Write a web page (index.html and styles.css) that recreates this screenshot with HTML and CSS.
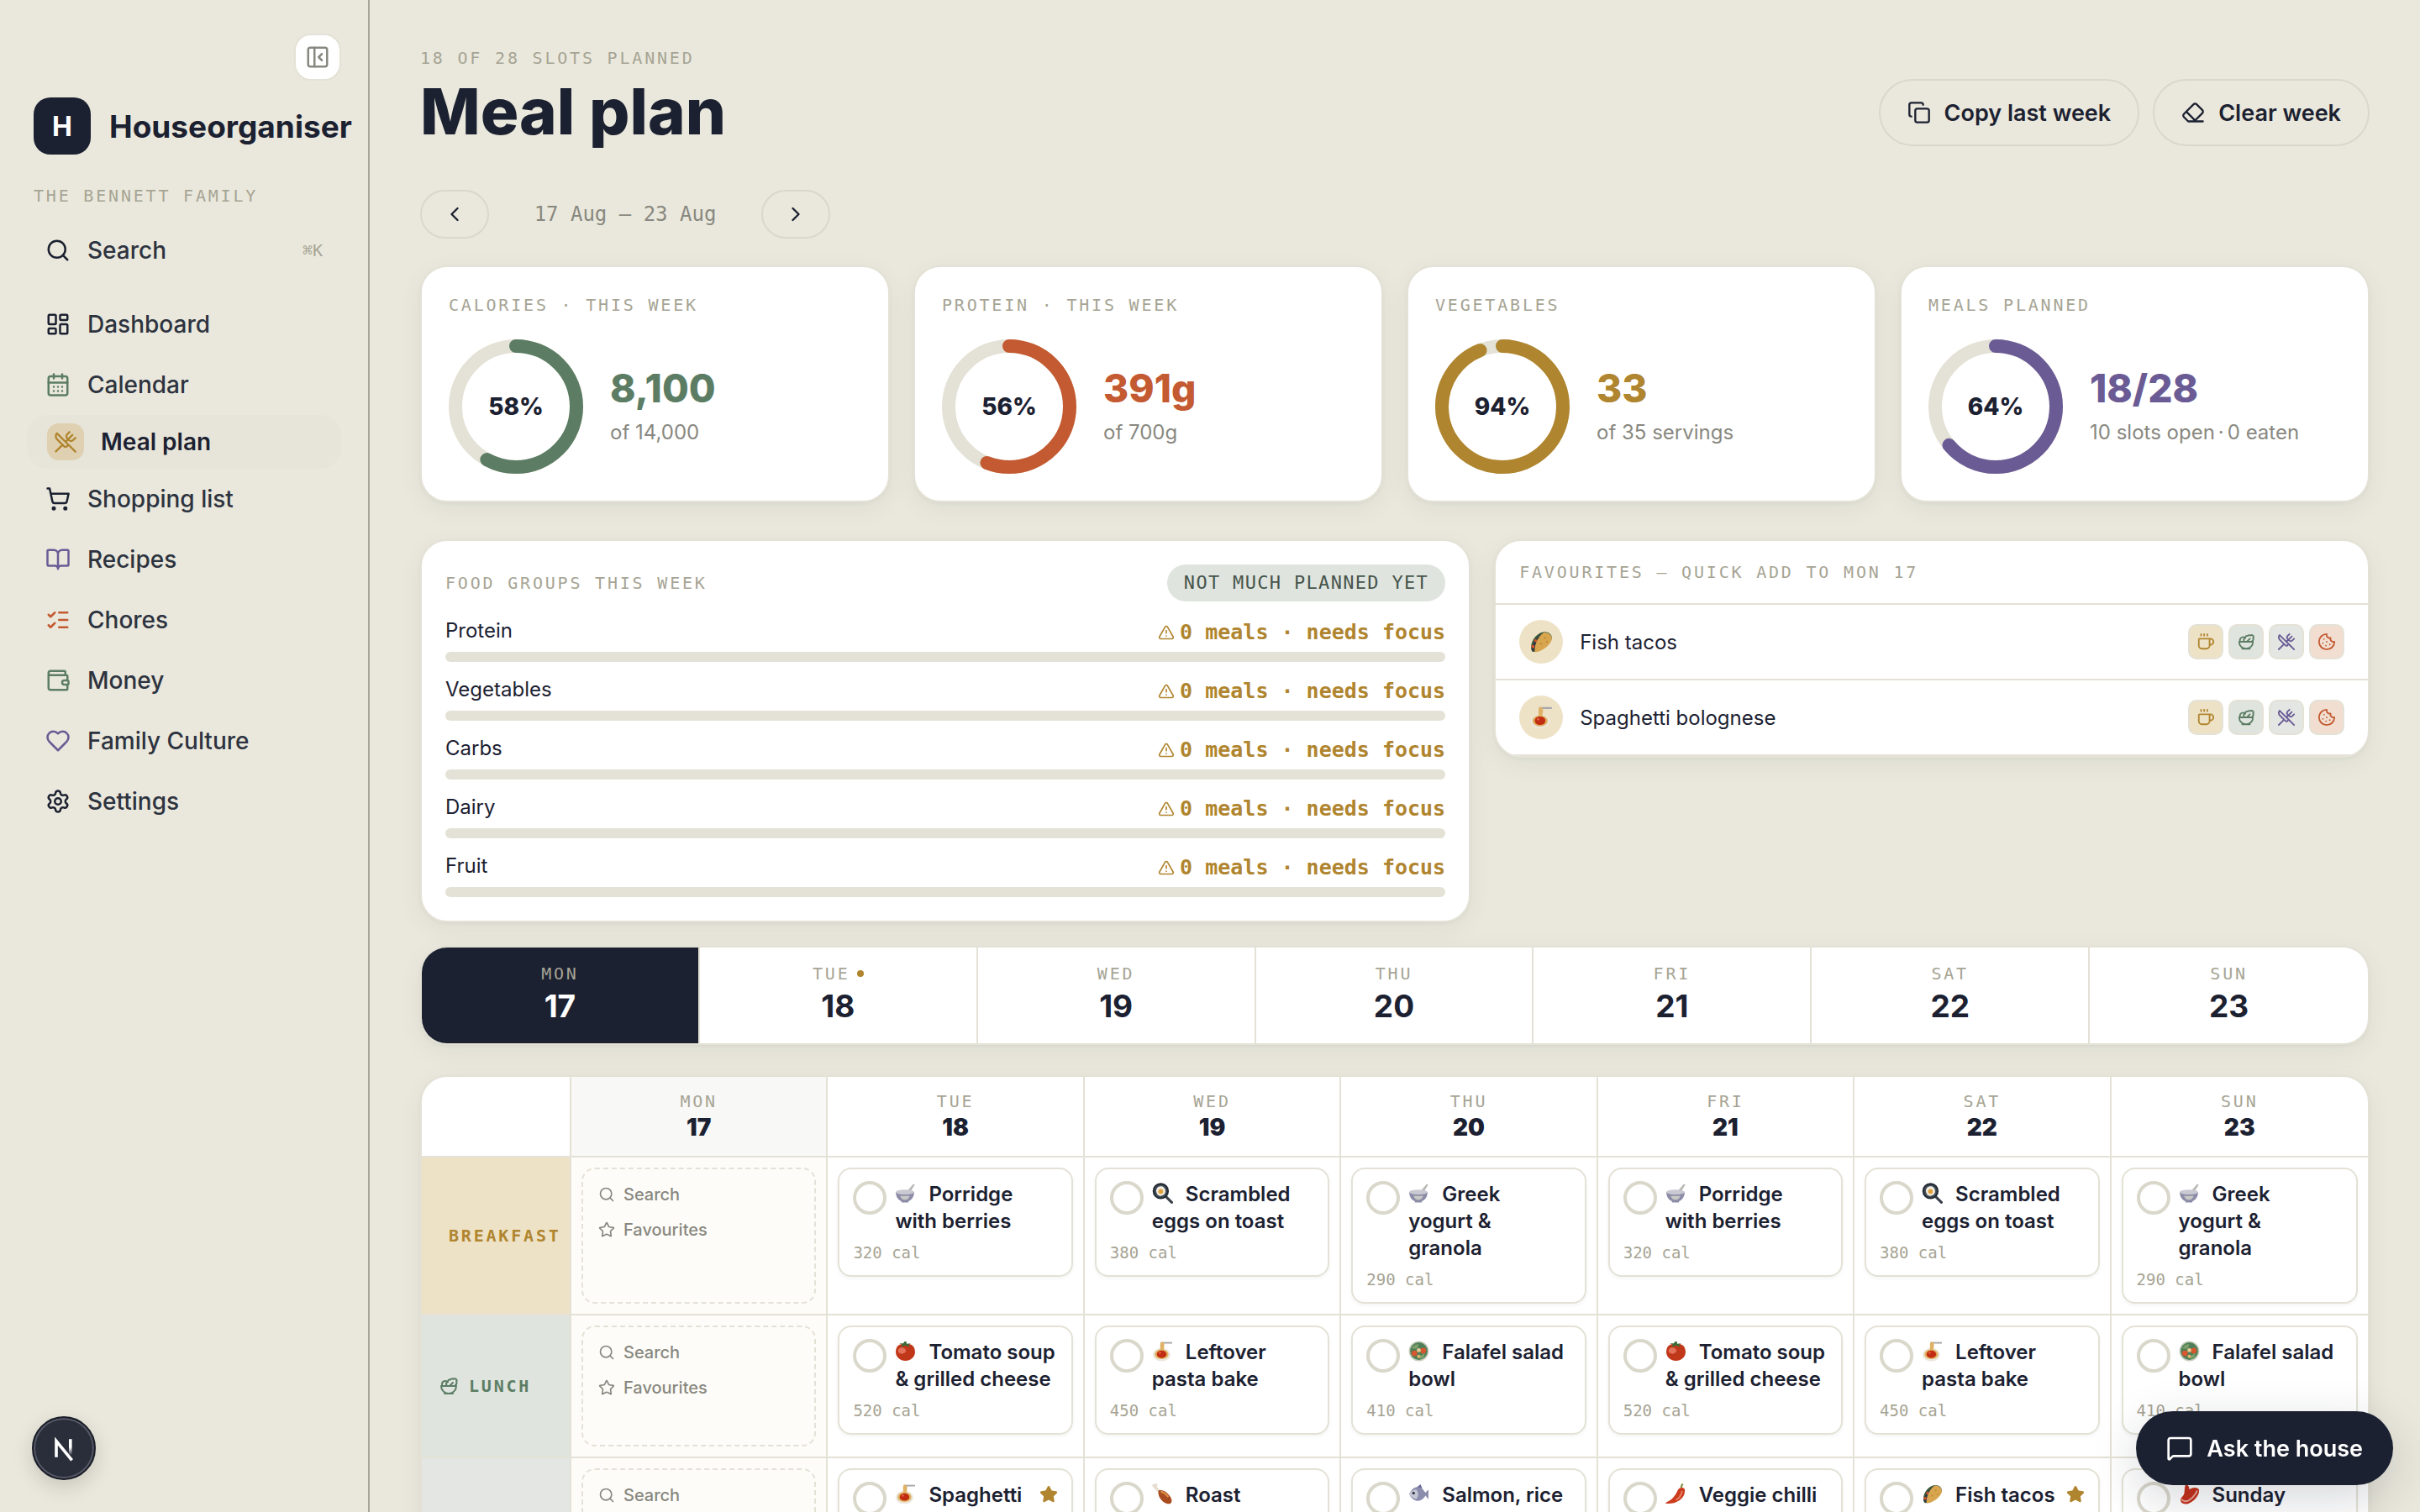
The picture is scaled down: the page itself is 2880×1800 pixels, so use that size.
FILE: index.html
```html
<!DOCTYPE html>
<html lang="en">
<head>
    <meta charset="UTF-8">
    <meta name="viewport" content="width=device-width, initial-scale=1.0">
    <title>Meal plan - Houseorganiser</title>
    <link rel="stylesheet" href="styles.css">
</head>
<body>
    <!-- Icon sprite -->
    <svg class="sprite" aria-hidden="true">
        <symbol id="panel" viewBox="0 0 24 24"><rect x="3" y="3" width="18" height="18" rx="2"/><path d="M9 3v18m7-6-3-3 3-3"/></symbol>
        <symbol id="search" viewBox="0 0 24 24"><circle cx="11" cy="11" r="8"/><path d="m21 21-4.3-4.3"/></symbol>
        <symbol id="dashboard" viewBox="0 0 24 24"><rect x="3" y="3" width="7" height="9" rx="1"/><rect x="14" y="3" width="7" height="5" rx="1"/><rect x="14" y="12" width="7" height="9" rx="1"/><rect x="3" y="16" width="7" height="5" rx="1"/></symbol>
        <symbol id="calendar" viewBox="0 0 24 24"><path d="M8 2v4M16 2v4M3 10h18M8 14h.01M12 14h.01M16 14h.01M8 18h.01M12 18h.01M16 18h.01"/><rect x="3" y="4" width="18" height="18" rx="2"/></symbol>
        <symbol id="utensils" viewBox="0 0 24 24"><path d="m16 2-2.3 2.3a3 3 0 0 0 0 4.2l1.8 1.8a3 3 0 0 0 4.2 0L22 8M15 15 3.3 3.3a4.2 4.2 0 0 0 0 6l7.3 7.3c.7.7 2 .7 2.8 0L15 15Zm0 0 7 7M2.1 21.8l6.4-6.3M19 5l-7 7"/></symbol>
        <symbol id="cart" viewBox="0 0 24 24"><circle cx="8" cy="21" r="1"/><circle cx="19" cy="21" r="1"/><path d="M2.05 2.05h2l2.66 12.42a2 2 0 0 0 2 1.58h9.78a2 2 0 0 0 1.95-1.57l1.65-7.43H5.12"/></symbol>
        <symbol id="book" viewBox="0 0 24 24"><path d="M12 7v14M3 18a1 1 0 0 1-1-1V4a1 1 0 0 1 1-1h5a4 4 0 0 1 4 4 4 4 0 0 1 4-4h5a1 1 0 0 1 1 1v13a1 1 0 0 1-1 1h-6a3 3 0 0 0-3 3 3 3 0 0 0-3-3z"/></symbol>
        <symbol id="checks" viewBox="0 0 24 24"><path d="m3 17 2 2 4-4M3 7l2 2 4-4M13 5h8M13 12h8M13 19h8"/></symbol>
        <symbol id="wallet" viewBox="0 0 24 24"><path d="M19 7V4a1 1 0 0 0-1-1H5a2 2 0 0 0 0 4h15a1 1 0 0 1 1 1v4h-3a2 2 0 0 0 0 4h3a1 1 0 0 0 1-1v-2a1 1 0 0 0-1-1M3 5v14a2 2 0 0 0 2 2h15a1 1 0 0 0 1-1v-4"/></symbol>
        <symbol id="heart" viewBox="0 0 24 24"><path d="M19 14c1.49-1.46 3-3.21 3-5.5A5.5 5.5 0 0 0 16.5 3c-1.76 0-3 .5-4.5 2-1.5-1.5-2.74-2-4.5-2A5.5 5.5 0 0 0 2 8.5c0 2.3 1.5 4.05 3 5.5l7 7Z"/></symbol>
        <symbol id="settings" viewBox="0 0 24 24"><path d="M9.671 4.136a2.34 2.34 0 0 1 4.659 0 2.34 2.34 0 0 0 3.319 1.915 2.34 2.34 0 0 1 2.33 4.033 2.34 2.34 0 0 0 0 3.831 2.34 2.34 0 0 1-2.33 4.033 2.34 2.34 0 0 0-3.319 1.915 2.34 2.34 0 0 1-4.659 0 2.34 2.34 0 0 0-3.32-1.915 2.34 2.34 0 0 1-2.33-4.033 2.34 2.34 0 0 0 0-3.831A2.34 2.34 0 0 1 6.35 6.051a2.34 2.34 0 0 0 3.319-1.915"/><circle cx="12" cy="12" r="3"/></symbol>
        <symbol id="copy" viewBox="0 0 24 24"><rect x="8" y="8" width="14" height="14" rx="2"/><path d="M4 16c-1.1 0-2-.9-2-2V4c0-1.1.9-2 2-2h10c1.1 0 2 .9 2 2"/></symbol>
        <symbol id="eraser" viewBox="0 0 24 24"><path d="m7 21-4.3-4.3c-1-1-1-2.5 0-3.4l9.6-9.6c1-1 2.5-1 3.4 0l5.6 5.6c1 1 1 2.5 0 3.4L13 21M22 21H7M5 11l9 9"/></symbol>
        <symbol id="left" viewBox="0 0 24 24"><path d="m15 18-6-6 6-6"/></symbol>
        <symbol id="right" viewBox="0 0 24 24"><path d="m9 18 6-6-6-6"/></symbol>
        <symbol id="alert" viewBox="0 0 24 24"><path d="m21.73 18-8-14a2 2 0 0 0-3.48 0l-8 14A2 2 0 0 0 4 21h16a2 2 0 0 0 1.73-3M12 9v4M12 17h.01"/></symbol>
        <symbol id="coffee" viewBox="0 0 24 24"><path d="M6 2v2M10 2v2M14 2v2M16 8a1 1 0 0 1 1 1v8a4 4 0 0 1-4 4H7a4 4 0 0 1-4-4V9a1 1 0 0 1 1-1h14a4 4 0 1 1 0 8h-1"/></symbol>
        <symbol id="salad" viewBox="0 0 24 24"><path d="M7 21h10M12 21a9 9 0 0 0 9-9H3a9 9 0 0 0 9 9ZM11.38 12a2.4 2.4 0 0 1-.4-4.77 2.4 2.4 0 0 1 3.2-2.77 2.4 2.4 0 0 1 3.47-.63 2.4 2.4 0 0 1 3.37 3.37 2.4 2.4 0 0 1-1.1 3.7 2.51 2.51 0 0 1 .03 1.1M13 12l4-4M10.9 7.25A3.99 3.99 0 0 0 4 10c0 .73.2 1.41.54 2"/></symbol>
        <symbol id="cookie" viewBox="0 0 24 24"><path d="M12 2a10 10 0 1 0 10 10 4 4 0 0 1-5-5 4 4 0 0 1-5-5M8.5 8.5v.01M16 15.5v.01M12 12v.01M11 17v.01M7 14v.01"/></symbol>
        <symbol id="star" viewBox="0 0 24 24"><path d="M11.525 2.295a.53.53 0 0 1 .95 0l2.31 4.679a2.123 2.123 0 0 0 1.595 1.16l5.166.756a.53.53 0 0 1 .294.904l-3.736 3.638a2.123 2.123 0 0 0-.611 1.878l.882 5.14a.53.53 0 0 1-.771.56l-4.618-2.428a2.122 2.122 0 0 0-1.973 0L6.396 21.01a.53.53 0 0 1-.77-.56l.881-5.139a2.122 2.122 0 0 0-.611-1.879L2.16 9.795a.53.53 0 0 1 .294-.906l5.165-.755a2.122 2.122 0 0 0 1.597-1.16z"/></symbol>
        <symbol id="message" viewBox="0 0 24 24"><path d="M22 17a2 2 0 0 1-2 2H6.828a2 2 0 0 0-1.414.586l-2.202 2.202A.71.71 0 0 1 2 21.286V5a2 2 0 0 1 2-2h16a2 2 0 0 1 2 2z"/></symbol>

        <!-- Food pictures -->
        <symbol id="bowl" viewBox="0 0 24 24"><path d="M12 12 21 1.5l1.6 1L16 13z" fill="#b9b6b4"/><path d="M1 10.500h21c0 6-3.500 9.500-6.500 10.500v1.500h-8V21C4.500 20 1 16.500 1 10.500z" fill="#8d8ca8"/><ellipse cx="11.500" cy="10.700" rx="10.500" ry="2.800" fill="#c9c9d2"/><path d="M6 15h11c-1 3-3 4.500-5.500 4.500S7 18 6 15z" fill="#c6c9c4"/></symbol>
        <symbol id="egg-pan" viewBox="0 0 24 24"><path d="m15 15 7.500 7.500" stroke="#39404a" stroke-width="3" stroke-linecap="round"/><circle cx="10" cy="9.500" r="9.300" fill="#232a36"/><circle cx="10" cy="9.500" r="7.200" fill="#46505a"/><path d="M5 8c1-4 6-5 8.500-2.500S16 12 13 14s-6 1-7-1-1.500-3-1-5z" fill="#f4efe4"/><circle cx="10" cy="10" r="2.800" fill="#e0a13c"/></symbol>
        <symbol id="tomato" viewBox="0 0 24 24"><path d="M12 5c5-3 11 .5 11 8 0 6-5 10-11 10S1 19 1 13C1 5.500 7 2 12 5z" fill="#c13719"/><ellipse cx="8" cy="11.500" rx="4.500" ry="3.500" fill="#e2735a"/><path d="m12 5.500-5 2 1.500-3L5 3l4.500.2L11 1h2l.5 2.500L18 3l-2.500 1.800L17 7.500z" fill="#3d6b3a"/></symbol>
        <symbol id="pasta" viewBox="0 0 24 24"><path d="M10 2.500h13" stroke="#a7a7ab" stroke-width="1.800"/><ellipse cx="11" cy="16" rx="10" ry="7.500" fill="#ece6dc"/><ellipse cx="11" cy="15.500" rx="7.800" ry="5.700" fill="#e0b05e"/><path d="M10 2c1.500-1 3-.6 3.500.8 1 2 .2 4-.3 8.200H9.500C9.500 7 9 4 10 2z" fill="#dfb267"/><ellipse cx="11" cy="15.500" rx="5.500" ry="4.300" fill="#c22c12"/><circle cx="9" cy="14" r="1.200" fill="#e0694a"/></symbol>
        <symbol id="salad-bowl" viewBox="0 0 24 24"><circle cx="12" cy="12" r="11.500" fill="#c9cdbb"/><circle cx="12" cy="12" r="10" fill="#4e7f58"/><path d="M4 9c2-4 5-5 8-5l-2 5zm9 9 6-4-1 5-4 2z" fill="#7fa06a"/><circle cx="7" cy="14.500" r="3.300" fill="#d9562f"/><circle cx="17" cy="11.500" r="3.300" fill="#d9562f"/><circle cx="12" cy="11" r="2.300" fill="#ecc98f"/><circle cx="12" cy="18" r="2" fill="#e6b46e"/></symbol>
        <symbol id="drumstick" viewBox="0 0 24 24"><path d="M2 2.500 10 11" stroke="#e6ded0" stroke-width="3.400" stroke-linecap="round"/><circle cx="4.500" cy="1.800" r="1.800" fill="#e6ded0"/><path d="M7.500 8c5-1 9 1.500 12.500 6 3 4 3 7 1.500 8.500s-5 1-8.500-1.500c-4.500-3.500-6.500-8-5.500-13z" fill="#a84b1e"/><path d="M10 9.500c3.500.5 6.500 3 8.500 6" stroke="#dd8f4a" stroke-width="2" fill="none"/></symbol>
        <symbol id="fish" viewBox="0 0 24 24"><path d="M1 12c3-6 6-8 10-8 5 1 7 4 8.500 6.500L23 7v11l-3.500-4C18 17 15 20 11 20s-8-3-10-8z" fill="#8b8cae"/><path d="M1 12c2-3 5-5 8-5 3 3 3 8 0 11-4-1-6-3-8-6z" fill="#c5c6d3"/><circle cx="6" cy="11" r="1.500" fill="#20242f"/><path d="m10 4 4-3 2 5z" fill="#6c6b9a"/></symbol>
        <symbol id="chilli" viewBox="0 0 24 24"><path d="M18 5c0-2 .5-3.500 2-4.500" stroke="#7f8d3c" stroke-width="2" fill="none"/><path d="M14.500 7c2-3 6-3 7.500-.5C23.500 16 14 24 1 23c-1-.1-1-1 0-1.500 7-2.500 10.500-8 13.500-14.500z" fill="#cc3b1e"/><path d="M19 8.500c-.5 4-3 8-7 10.500" stroke="#e88367" stroke-width="1.800" fill="none"/></symbol>
        <symbol id="taco" viewBox="0 0 24 24"><path d="M3 22C-1 15 6 3 15 2c6-.3 9 4 7.500 8C20 16 9 24 3 22z" fill="#3f5a3a"/><path d="M2 20 4 14l3-5 5-5 3 3-4 7-5 8z" fill="#2c3a44"/><circle cx="3.800" cy="17" r="1.700" fill="#d4502c"/><circle cx="6.500" cy="11" r="1.500" fill="#d4502c"/><path d="M5.500 22.500C5 15 9 6 15 2.500c6-.5 9 4.500 7.500 8.500C20 17 11 23 5.500 22.500z" fill="#d9a650"/><circle cx="16" cy="8" r="1" fill="#c18a34"/><circle cx="12" cy="14" r="1" fill="#c18a34"/><circle cx="18" cy="12" r="1" fill="#c18a34"/></symbol>
        <symbol id="meat" viewBox="0 0 24 24"><path d="M8 1c3 1 4 3 4 6 4-3 9-3 11 0 1 6-5 13-12 16-5 1.500-9-.5-9-4 0-3 3-4 4-7s0-8 2-11z" fill="#c5301a"/><path d="M3 18c2 3 6 3 9 1s7-6 9-11" stroke="#eba99a" stroke-width="1.800" fill="none"/></symbol>
    </svg>

    <div class="app">
        <aside class="sidebar">
            <button class="collapse-btn" aria-label="Collapse sidebar"><svg class="icon"><use href="#panel"/></svg></button>
            <div class="brand">
                <span class="brand-mark">H</span>
                <span class="brand-name">Houseorganiser</span>
            </div>
            <p class="label family">The Bennett family</p>
            <button class="nav-item nav-search">
                <svg class="icon"><use href="#search"/></svg>
                Search
                <kbd>⌘K</kbd>
            </button>
            <nav>
                <a class="nav-item ink" href="#"><svg class="icon"><use href="#dashboard"/></svg>Dashboard</a>
                <a class="nav-item green" href="#"><svg class="icon"><use href="#calendar"/></svg>Calendar</a>
                <a class="nav-item gold active" href="#"><span class="nav-tile"><svg class="icon"><use href="#utensils"/></svg></span>Meal plan</a>
                <a class="nav-item ink" href="#"><svg class="icon"><use href="#cart"/></svg>Shopping list</a>
                <a class="nav-item purple" href="#"><svg class="icon"><use href="#book"/></svg>Recipes</a>
                <a class="nav-item orange" href="#"><svg class="icon"><use href="#checks"/></svg>Chores</a>
                <a class="nav-item green" href="#"><svg class="icon"><use href="#wallet"/></svg>Money</a>
                <a class="nav-item purple" href="#"><svg class="icon"><use href="#heart"/></svg>Family Culture</a>
                <a class="nav-item ink" href="#"><svg class="icon"><use href="#settings"/></svg>Settings</a>
            </nav>
        </aside>

        <main class="main">
            <header class="page-header">
                <div>
                    <p class="label">18 of 28 slots planned</p>
                    <h1>Meal plan</h1>
                </div>
                <div class="actions">
                    <button class="pill-btn"><svg class="icon"><use href="#copy"/></svg>Copy last week</button>
                    <button class="pill-btn"><svg class="icon"><use href="#eraser"/></svg>Clear week</button>
                </div>
            </header>

            <div class="week-nav">
                <button class="week-btn" aria-label="Previous week"><svg class="icon"><use href="#left"/></svg></button>
                <span class="week-range">17 Aug – 23 Aug</span>
                <button class="week-btn" aria-label="Next week"><svg class="icon"><use href="#right"/></svg></button>
            </div>

            <section class="stats">
                <article class="card stat green">
                    <h2 class="label">Calories · this week</h2>
                    <div class="stat-body">
                        <div class="ring">
                            <svg viewBox="0 0 160 160"><circle class="ring-track" cx="80" cy="80" r="72"/><circle class="ring-value" cx="80" cy="80" r="72" pathLength="100" stroke-dasharray="58 100"/></svg>
                            <span>58%</span>
                        </div>
                        <div><p class="stat-value">8,100</p><p class="stat-sub">of 14,000</p></div>
                    </div>
                </article>
                <article class="card stat orange">
                    <h2 class="label">Protein · this week</h2>
                    <div class="stat-body">
                        <div class="ring">
                            <svg viewBox="0 0 160 160"><circle class="ring-track" cx="80" cy="80" r="72"/><circle class="ring-value" cx="80" cy="80" r="72" pathLength="100" stroke-dasharray="56 100"/></svg>
                            <span>56%</span>
                        </div>
                        <div><p class="stat-value">391g</p><p class="stat-sub">of 700g</p></div>
                    </div>
                </article>
                <article class="card stat gold">
                    <h2 class="label">Vegetables</h2>
                    <div class="stat-body">
                        <div class="ring">
                            <svg viewBox="0 0 160 160"><circle class="ring-track" cx="80" cy="80" r="72"/><circle class="ring-value" cx="80" cy="80" r="72" pathLength="100" stroke-dasharray="94 100"/></svg>
                            <span>94%</span>
                        </div>
                        <div><p class="stat-value">33</p><p class="stat-sub">of 35 servings</p></div>
                    </div>
                </article>
                <article class="card stat purple">
                    <h2 class="label">Meals planned</h2>
                    <div class="stat-body">
                        <div class="ring">
                            <svg viewBox="0 0 160 160"><circle class="ring-track" cx="80" cy="80" r="72"/><circle class="ring-value" cx="80" cy="80" r="72" pathLength="100" stroke-dasharray="64 100"/></svg>
                            <span>64%</span>
                        </div>
                        <div><p class="stat-value">18/28</p><p class="stat-sub">10 slots open<span class="sep">·</span>0 eaten</p></div>
                    </div>
                </article>
            </section>

            <section class="overview">
                <article class="card groups">
                    <header class="groups-header">
                        <h2 class="label">Food groups this week</h2>
                        <span class="badge">Not much planned yet</span>
                    </header>
                    <div class="group">
                        <div class="group-line"><span>Protein</span><span class="focus"><svg class="icon"><use href="#alert"/></svg>0 meals · needs focus</span></div>
                        <div class="bar"></div>
                    </div>
                    <div class="group">
                        <div class="group-line"><span>Vegetables</span><span class="focus"><svg class="icon"><use href="#alert"/></svg>0 meals · needs focus</span></div>
                        <div class="bar"></div>
                    </div>
                    <div class="group">
                        <div class="group-line"><span>Carbs</span><span class="focus"><svg class="icon"><use href="#alert"/></svg>0 meals · needs focus</span></div>
                        <div class="bar"></div>
                    </div>
                    <div class="group">
                        <div class="group-line"><span>Dairy</span><span class="focus"><svg class="icon"><use href="#alert"/></svg>0 meals · needs focus</span></div>
                        <div class="bar"></div>
                    </div>
                    <div class="group">
                        <div class="group-line"><span>Fruit</span><span class="focus"><svg class="icon"><use href="#alert"/></svg>0 meals · needs focus</span></div>
                        <div class="bar"></div>
                    </div>
                </article>

                <article class="card favourites">
                    <h2 class="label">Favourites — quick add to Mon 17</h2>
                    <div class="fav-row">
                        <span class="fav-pic"><svg class="food"><use href="#taco"/></svg></span>
                        <span class="fav-name">Fish tacos</span>
                        <button class="slot-btn breakfast" aria-label="Add to breakfast"><svg class="icon"><use href="#coffee"/></svg></button>
                        <button class="slot-btn lunch" aria-label="Add to lunch"><svg class="icon"><use href="#salad"/></svg></button>
                        <button class="slot-btn dinner" aria-label="Add to dinner"><svg class="icon"><use href="#utensils"/></svg></button>
                        <button class="slot-btn snack" aria-label="Add to snacks"><svg class="icon"><use href="#cookie"/></svg></button>
                    </div>
                    <div class="fav-row">
                        <span class="fav-pic"><svg class="food"><use href="#pasta"/></svg></span>
                        <span class="fav-name">Spaghetti bolognese</span>
                        <button class="slot-btn breakfast" aria-label="Add to breakfast"><svg class="icon"><use href="#coffee"/></svg></button>
                        <button class="slot-btn lunch" aria-label="Add to lunch"><svg class="icon"><use href="#salad"/></svg></button>
                        <button class="slot-btn dinner" aria-label="Add to dinner"><svg class="icon"><use href="#utensils"/></svg></button>
                        <button class="slot-btn snack" aria-label="Add to snacks"><svg class="icon"><use href="#cookie"/></svg></button>
                    </div>
                </article>
            </section>

            <section class="card days">
                <button class="day selected"><span class="label">Mon</span><b>17</b></button>
                <button class="day"><span class="label has-dot">Tue<i class="dot"></i></span><b>18</b></button>
                <button class="day"><span class="label">Wed</span><b>19</b></button>
                <button class="day"><span class="label">Thu</span><b>20</b></button>
                <button class="day"><span class="label">Fri</span><b>21</b></button>
                <button class="day"><span class="label">Sat</span><b>22</b></button>
                <button class="day"><span class="label">Sun</span><b>23</b></button>
            </section>

            <div class="card plan">
                <table>
                    <thead>
                        <tr>
                            <th class="meal-col"></th>
                            <th class="current"><span class="label">Mon</span><b>17</b></th>
                            <th><span class="label">Tue</span><b>18</b></th>
                            <th><span class="label">Wed</span><b>19</b></th>
                            <th><span class="label">Thu</span><b>20</b></th>
                            <th><span class="label">Fri</span><b>21</b></th>
                            <th><span class="label">Sat</span><b>22</b></th>
                            <th><span class="label">Sun</span><b>23</b></th>
                        </tr>
                    </thead>
                    <tbody>
                        <tr>
                            <th class="breakfast"><div class="meal-label"><svg class="icon"><use href="#coffee"/></svg><span class="label">Breakfast</span></div></th>
                            <td class="current">
                                <div class="empty">
                                    <button><svg class="icon"><use href="#search"/></svg>Search</button>
                                    <button><svg class="icon"><use href="#star"/></svg>Favourites</button>
                                </div>
                            </td>
                            <td><div class="meal"><div class="meal-top"><input type="checkbox" id="b18"><label for="b18"><svg class="food"><use href="#bowl"/></svg>Porridge with berries</label></div><p class="cal">320 cal</p></div></td>
                            <td><div class="meal"><div class="meal-top"><input type="checkbox" id="b19"><label for="b19"><svg class="food"><use href="#egg-pan"/></svg>Scrambled eggs on toast</label></div><p class="cal">380 cal</p></div></td>
                            <td><div class="meal"><div class="meal-top"><input type="checkbox" id="b20"><label for="b20"><svg class="food"><use href="#bowl"/></svg>Greek yogurt&nbsp;&amp;<br>granola</label></div><p class="cal">290 cal</p></div></td>
                            <td><div class="meal"><div class="meal-top"><input type="checkbox" id="b21"><label for="b21"><svg class="food"><use href="#bowl"/></svg>Porridge with berries</label></div><p class="cal">320 cal</p></div></td>
                            <td><div class="meal"><div class="meal-top"><input type="checkbox" id="b22"><label for="b22"><svg class="food"><use href="#egg-pan"/></svg>Scrambled eggs on toast</label></div><p class="cal">380 cal</p></div></td>
                            <td><div class="meal"><div class="meal-top"><input type="checkbox" id="b23"><label for="b23"><svg class="food"><use href="#bowl"/></svg>Greek yogurt&nbsp;&amp;<br>granola</label></div><p class="cal">290 cal</p></div></td>
                        </tr>
                        <tr>
                            <th class="lunch"><div class="meal-label"><svg class="icon"><use href="#salad"/></svg><span class="label">Lunch</span></div></th>
                            <td class="current">
                                <div class="empty">
                                    <button><svg class="icon"><use href="#search"/></svg>Search</button>
                                    <button><svg class="icon"><use href="#star"/></svg>Favourites</button>
                                </div>
                            </td>
                            <td><div class="meal"><div class="meal-top"><input type="checkbox" id="l18"><label for="l18"><svg class="food"><use href="#tomato"/></svg>Tomato soup &amp; grilled cheese</label></div><p class="cal">520 cal</p></div></td>
                            <td><div class="meal"><div class="meal-top"><input type="checkbox" id="l19"><label for="l19"><svg class="food"><use href="#pasta"/></svg>Leftover pasta bake</label></div><p class="cal">450 cal</p></div></td>
                            <td><div class="meal"><div class="meal-top"><input type="checkbox" id="l20"><label for="l20"><svg class="food"><use href="#salad-bowl"/></svg>Falafel salad bowl</label></div><p class="cal">410 cal</p></div></td>
                            <td><div class="meal"><div class="meal-top"><input type="checkbox" id="l21"><label for="l21"><svg class="food"><use href="#tomato"/></svg>Tomato soup &amp; grilled cheese</label></div><p class="cal">520 cal</p></div></td>
                            <td><div class="meal"><div class="meal-top"><input type="checkbox" id="l22"><label for="l22"><svg class="food"><use href="#pasta"/></svg>Leftover pasta bake</label></div><p class="cal">450 cal</p></div></td>
                            <td><div class="meal"><div class="meal-top"><input type="checkbox" id="l23"><label for="l23"><svg class="food"><use href="#salad-bowl"/></svg>Falafel salad bowl</label></div><p class="cal">410 cal</p></div></td>
                        </tr>
                        <tr>
                            <th class="dinner"><div class="meal-label"><svg class="icon"><use href="#utensils"/></svg><span class="label">Dinner</span></div></th>
                            <td class="current">
                                <div class="empty">
                                    <button><svg class="icon"><use href="#search"/></svg>Search</button>
                                    <button><svg class="icon"><use href="#star"/></svg>Favourites</button>
                                </div>
                            </td>
                            <td><div class="meal"><div class="meal-top"><input type="checkbox" id="d18"><label for="d18"><svg class="food"><use href="#pasta"/></svg>Spaghetti bolognese</label><svg class="icon fav-star"><use href="#star"/></svg></div><p class="cal">640 cal</p></div></td>
                            <td><div class="meal"><div class="meal-top"><input type="checkbox" id="d19"><label for="d19"><svg class="food"><use href="#drumstick"/></svg>Roast chicken</label></div><p class="cal">610 cal</p></div></td>
                            <td><div class="meal"><div class="meal-top"><input type="checkbox" id="d20"><label for="d20"><svg class="food"><use href="#fish"/></svg>Salmon, rice &amp; greens</label></div><p class="cal">560 cal</p></div></td>
                            <td><div class="meal"><div class="meal-top"><input type="checkbox" id="d21"><label for="d21"><svg class="food"><use href="#chilli"/></svg>Veggie chilli</label></div><p class="cal">480 cal</p></div></td>
                            <td><div class="meal"><div class="meal-top"><input type="checkbox" id="d22"><label for="d22"><svg class="food"><use href="#taco"/></svg>Fish tacos</label><svg class="icon fav-star"><use href="#star"/></svg></div><p class="cal">540 cal</p></div></td>
                            <td><div class="meal"><div class="meal-top"><input type="checkbox" id="d23"><label for="d23"><svg class="food"><use href="#meat"/></svg>Sunday roast&nbsp;dinner</label></div><p class="cal">720 cal</p></div></td>
                        </tr>
                    </tbody>
                </table>
            </div>
        </main>
    </div>

    <button class="dev-btn" aria-label="Open dev tools">
        <svg viewBox="0 0 40 40">
            <defs><linearGradient id="fade" x1="0" y1="0" x2="0" y2="1"><stop offset="50%" stop-color="#fff"/><stop offset="100%" stop-color="#fff" stop-opacity="0"/></linearGradient></defs>
            <path d="M12.500 29V13L28 32" fill="none" stroke="#fff" stroke-width="3"/>
            <rect x="25" y="11" width="3" height="16" fill="url(#fade)"/>
        </svg>
    </button>
    <button class="ask-btn"><svg class="icon"><use href="#message"/></svg>Ask the house</button>
</body>
</html>
```
FILE: styles.css
```css
:root {
    --bg: #eae8dc;
    --line: #e4e2d6;
    --line-strong: #dad7cb;
    --ink: #1c2131;
    --text: #2d333f;
    --mid: #888880;
    --muted: #a6a494;
    --green: #5c7d64;
    --orange: #c35a31;
    --gold: #b0852f;
    --purple: #6b5b95;
    --mono: "DejaVu Sans Mono", monospace;
}

* {
    margin: 0;
    padding: 0;
    box-sizing: border-box;
}

body {
    background: var(--bg);
    color: var(--ink);
    font-family: Inter, sans-serif;
    font-size: 24px;
}

button {
    background: none;
    border: none;
    color: inherit;
    font: inherit;
    cursor: pointer;
}

a {
    color: inherit;
    text-decoration: none;
}

.sprite {
    position: absolute;
    width: 0;
    height: 0;
}

.icon {
    width: 30px;
    height: 30px;
    fill: none;
    stroke: currentColor;
    stroke-width: 2;
    stroke-linecap: round;
    stroke-linejoin: round;
    flex: none;
}

.food {
    width: 25px;
    height: 25px;
    flex: none;
}

.label {
    font-family: var(--mono);
    font-size: 20px;
    font-weight: 400;
    line-height: 26px;
    letter-spacing: 0.14em;
    text-transform: uppercase;
    color: var(--muted);
}

.green { --accent: var(--green); }
.orange { --accent: var(--orange); }
.gold { --accent: var(--gold); }
.purple { --accent: var(--purple); }
.ink { --accent: var(--ink); }

.app {
    display: flex;
    height: 100vh;
}

/* Sidebar */
.sidebar {
    width: 440px;
    flex: none;
    display: flex;
    flex-direction: column;
    padding: 40px 32px;
    border-right: 2px solid #a8a698;
}

.collapse-btn {
    display: grid;
    place-items: center;
    align-self: flex-end;
    width: 56px;
    height: 56px;
    background: #fff;
    border: 2px solid var(--line);
    border-radius: 20px;
    color: var(--mid);
}

.brand {
    display: flex;
    align-items: center;
    gap: 22px;
    margin: 20px 0 36px 8px;
}

.brand-mark {
    display: grid;
    place-items: center;
    width: 68px;
    height: 68px;
    flex: none;
    background: var(--ink);
    border-radius: 20px;
    color: #fff;
    font-size: 32px;
    font-weight: 700;
}

.brand-name {
    font-size: 37px;
    font-weight: 700;
}

.family {
    margin: 0 0 16px 8px;
}

.nav-item {
    display: flex;
    align-items: center;
    gap: 20px;
    width: 100%;
    height: 72px;
    padding: 0 22px;
    border-radius: 24px;
    color: var(--text);
    font-size: 28px;
    font-weight: 500;
}

.nav-item .icon {
    color: var(--accent, var(--ink));
}

.nav-search {
    margin-bottom: 16px;
}

.nav-search kbd {
    margin-left: auto;
    font-family: var(--mono);
    font-size: 20px;
    color: var(--muted);
}

.nav-item.active {
    height: 64px;
    padding: 0 24px;
    background: #e7e5da;
    color: var(--ink);
    font-weight: 600;
}

.nav-tile {
    display: grid;
    place-items: center;
    width: 44px;
    height: 44px;
    background: #dfd0b1;
    border-radius: 14px;
}

.nav-tile .icon {
    width: 28px;
    height: 28px;
}

/* Main column */
.main {
    flex: 1;
    min-width: 0;
    overflow-y: auto;
    scrollbar-width: none;
    padding: 56px 60px 80px;
}

.page-header {
    display: flex;
    justify-content: space-between;
    align-items: flex-end;
    margin-bottom: 52px;
}

h1 {
    margin-top: 8px;
    font-size: 76px;
    font-weight: 800;
    line-height: 84px;
}

.actions {
    display: flex;
    gap: 16px;
}

.pill-btn {
    display: flex;
    align-items: center;
    gap: 16px;
    height: 80px;
    padding: 0 32px;
    border: 2px solid var(--line-strong);
    border-radius: 40px;
    font-size: 27px;
    font-weight: 600;
}

.pill-btn .icon {
    width: 28px;
    height: 28px;
}

.week-nav {
    display: flex;
    align-items: center;
    gap: 16px;
    margin-bottom: 32px;
}

.week-btn {
    display: grid;
    place-items: center;
    width: 82px;
    height: 58px;
    border: 2px solid var(--line-strong);
    border-radius: 29px;
}

.week-btn .icon {
    width: 28px;
    height: 28px;
}

.week-range {
    min-width: 292px;
    font-family: var(--mono);
    font-size: 24px;
    text-align: center;
    color: var(--mid);
}

.card {
    background: #fff;
    border: 2px solid var(--line);
    border-radius: 32px;
    box-shadow: 0 2px 4px rgba(28, 33, 49, 0.04), 0 8px 32px rgba(28, 33, 49, 0.05);
}

/* Stat cards */
.stats {
    display: grid;
    grid-template-columns: repeat(4, 1fr);
    gap: 28px;
    margin-bottom: 44px;
}

.stat {
    padding: 32px;
}

.stat-body {
    display: flex;
    align-items: center;
    gap: 32px;
    margin-top: 28px;
}

.ring {
    display: grid;
    place-items: center;
    flex: none;
}

.ring svg,
.ring span {
    grid-area: 1 / 1;
}

.ring svg {
    width: 160px;
    height: 160px;
    transform: rotate(-90deg);
    fill: none;
    stroke-width: 16;
}

.ring span {
    font-size: 28px;
    font-weight: 800;
}

.ring-track {
    stroke: var(--line);
}

.ring-value {
    stroke: var(--accent);
    stroke-linecap: round;
}

.stat-value {
    margin-bottom: 4px;
    font-size: 46px;
    font-weight: 800;
    line-height: 58px;
    color: var(--accent);
}

.stat-sub {
    line-height: 40px;
    color: var(--mid);
}

.sep {
    margin: 0 4px;
}

/* Food groups and favourites */
.overview {
    display: grid;
    grid-template-columns: 1.2fr 1fr;
    align-items: start;
    gap: 28px;
    margin-bottom: 28px;
}

.groups {
    display: flex;
    flex-direction: column;
    gap: 14px;
    padding: 28px;
}

.groups-header {
    display: flex;
    justify-content: space-between;
    align-items: center;
    margin-bottom: 2px;
}

.badge {
    padding: 0 20px;
    background: #dfe4de;
    border-radius: 22px;
    font-family: var(--mono);
    font-size: 22px;
    line-height: 44px;
    letter-spacing: 0.06em;
    text-transform: uppercase;
    color: #46544c;
}

.group-line {
    display: flex;
    justify-content: space-between;
    align-items: flex-end;
    margin-bottom: 6px;
    line-height: 38px;
}

.focus {
    display: flex;
    align-items: center;
    gap: 6px;
    font-family: var(--mono);
    font-size: 25px;
    font-weight: 700;
    line-height: 34px;
    color: var(--gold);
}

.focus .icon {
    width: 20px;
    height: 20px;
}

.bar {
    height: 12px;
    background: var(--line);
    border-radius: 6px;
}

.favourites {
    overflow: hidden;
}

.favourites > .label {
    padding: 24px 28px;
    border-bottom: 2px solid var(--line);
}

.fav-row {
    display: flex;
    align-items: center;
    gap: 6px;
    height: 90px;
    padding: 0 28px;
    border-bottom: 2px solid var(--line);
}

.fav-pic {
    display: grid;
    place-items: center;
    width: 52px;
    height: 52px;
    background: #eee2c6;
    border-radius: 50%;
}

.fav-pic .food {
    width: 28px;
    height: 28px;
}

.fav-name {
    flex: 1;
    margin-left: 14px;
}

.slot-btn {
    display: grid;
    place-items: center;
    width: 42px;
    height: 42px;
    border: 2px solid var(--line);
    border-radius: 10px;
}

.slot-btn .icon {
    width: 22px;
    height: 22px;
}

.breakfast {
    background: #eee2c6;
    color: var(--gold);
}

.lunch {
    background: #dfe4de;
    color: var(--green);
}

.dinner {
    background: #e3e6e3;
    color: var(--purple);
}

.snack {
    background: #f1ded0;
    color: var(--orange);
}

/* Day picker */
.days {
    display: grid;
    grid-template-columns: repeat(7, 1fr);
    margin-bottom: 36px;
    overflow: hidden;
}

.day {
    display: flex;
    flex-direction: column;
    align-items: center;
    gap: 4px;
    padding: 18px 0 22px;
    border-right: 2px solid var(--line);
}

.day:last-child {
    border-right: none;
}

.day b {
    font-size: 37px;
    line-height: 44px;
}

.day.selected {
    background: var(--ink);
    color: #fff;
}

.has-dot {
    display: flex;
    align-items: center;
    gap: 8px;
}

.dot {
    width: 8px;
    height: 8px;
    background: var(--gold);
    border-radius: 50%;
}

/* Weekly table */
.plan {
    overflow: hidden;
}

table {
    width: 100%;
    table-layout: fixed;
    border-collapse: separate;
    border-spacing: 0;
}

th,
td {
    border-right: 2px solid var(--line);
    border-bottom: 2px solid var(--line);
}

th:last-child,
td:last-child {
    border-right: none;
}

thead th {
    padding: 16px 0;
}

thead b,
thead .label {
    display: block;
}

thead b {
    font-size: 28px;
    line-height: 36px;
}

thead .current {
    background: #f8f8f6;
}

.meal-col {
    width: 178px;
}

td {
    height: 1px;
    padding: 12px;
    vertical-align: top;
}

td.current {
    background: #fdfcf8;
}

.meal-label {
    display: flex;
    align-items: center;
    gap: 12px;
    padding: 0 12px 0 20px;
}

.meal-label .icon {
    width: 24px;
    height: 24px;
    flex: 0 1 24px;
    min-width: 0;
}

.meal-label .label {
    font-weight: 700;
    color: inherit;
}

.empty {
    display: flex;
    flex-direction: column;
    align-items: flex-start;
    gap: 2px;
    height: 100%;
    min-height: 144px;
    padding: 10px 18px;
    border: 2px dashed var(--line);
    border-radius: 16px;
}

.empty button {
    display: flex;
    align-items: center;
    gap: 10px;
    height: 40px;
    font-size: 20px;
    font-weight: 500;
    color: var(--mid);
}

.empty .icon {
    width: 20px;
    height: 20px;
}

.meal {
    padding: 14px 16px;
    background: #fff;
    border: 2px solid var(--line);
    border-radius: 16px;
    box-shadow: 0 2px 4px rgba(28, 33, 49, 0.05);
}

.meal-top {
    display: flex;
    align-items: flex-start;
    gap: 10px;
    margin-bottom: 8px;
}

.meal-top input {
    appearance: none;
    width: 40px;
    height: 40px;
    flex: none;
    border: 4px solid var(--line-strong);
    border-radius: 50%;
}

.meal-top label {
    flex: 1;
    min-width: 0;
    font-size: 24px;
    font-weight: 600;
    line-height: 32px;
}

.meal-top .food {
    margin-right: 15px;
    vertical-align: -3px;
}

.fav-star {
    width: 22px;
    height: 22px;
    margin-top: 4px;
    fill: var(--gold);
    color: var(--gold);
}

.cal {
    font-family: var(--mono);
    font-size: 19px;
    line-height: 26px;
    color: var(--muted);
}

/* Floating buttons */
.dev-btn {
    position: fixed;
    left: 38px;
    bottom: 38px;
    width: 76px;
    height: 76px;
    background: #2a2e3b;
    border: 2px solid #1a1d28;
    border-radius: 50%;
    box-shadow: inset 0 0 0 2px #565a66, 0 8px 24px rgba(0, 0, 0, 0.15);
}

.dev-btn svg {
    display: block;
    width: 48px;
    height: 48px;
    margin: 0 auto;
}

.ask-btn {
    position: fixed;
    right: 32px;
    bottom: 32px;
    display: flex;
    align-items: center;
    gap: 16px;
    height: 88px;
    padding: 0 36px;
    background: var(--ink);
    border-radius: 44px;
    box-shadow: 0 16px 56px rgba(28, 33, 49, 0.18);
    color: #fff;
    font-size: 27px;
    font-weight: 600;
}

.ask-btn .icon {
    width: 32px;
    height: 32px;
}
```
